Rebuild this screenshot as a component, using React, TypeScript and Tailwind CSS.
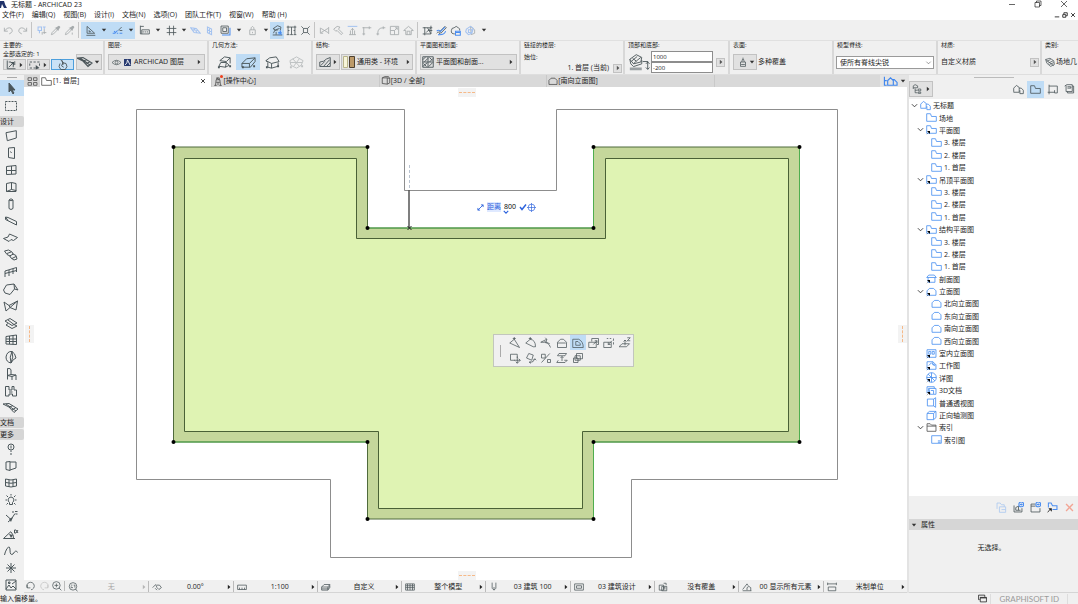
import React, { useState } from 'react';

type GlyphProps = {
  d: string;
  blue?: string; // parts drawn in the accent colour
  fill?: string; // solid parts
  className?: string;
};

// All glyphs are drawn on a 16 x 16 grid
function Glyph({ d, blue, fill, className = 'size-4 text-[#4b565a]' }: GlyphProps) {
  return (
    <svg viewBox="0 0 16 16" className={`shrink-0 ${className}`} fill="none" stroke="currentColor" strokeWidth="1.2" aria-hidden="true">
      <path d={d} />
      {blue ? <path d={blue} stroke="#4a8df0" strokeWidth="1.5" /> : null}
      {fill ? <path d={fill} fill="currentColor" stroke="none" /> : null}
    </svg>
  );
}

function Arrow({ down = false, className = 'text-[#333]' }: { down?: boolean; className?: string }) {
  return (
    <svg viewBox="0 0 6 6" className={`size-[6px] shrink-0 ${className}`} aria-hidden="true">
      <path d={down ? 'M0.8 1.8h4.4l-2.2 2.6z' : 'M1.8 0.8v4.4l2.6-2.2z'} fill="currentColor" />
    </svg>
  );
}

const menus = ['文件(F)', '编辑(Q)', '视图(B)', '设计(I)', '文档(N)', '选项(O)', '团队工作(T)', '视窗(W)', '帮助 (H)'];

type Tool = { name: string; d: string; blue?: string; fill?: string };

const arrowTool: Tool = { name: '箭头', d: 'M6 3v9l2-2 2 4 1-1-2-3h3z', fill: 'M6 3v9l2-2 2 4 1-1-2-3h3z' };

const designTools: Tool[] = [
  { name: '墙', d: 'M3 4.7L13.3 2.7V10L4.3 12.7z' },
  { name: '门', d: 'M5.5 3L11.5 2.5V13.5L5.5 12.5zM7.5 6.5L8.5 8' },
  { name: '窗', d: 'M3.5 4.5L13 3.5V12L3.5 12.5zM8.5 4V12M3.5 8.5H13' },
  { name: '转角窗', d: 'M3.5 4.5L8.5 3.5 13 4.5V11.5L8.5 10.5 3.5 12.5zM8.5 3.5V10.5M3.5 12.5H13V11' },
  { name: '柱', d: 'M6 4V12.5Q8 14.5 10 12.5V4Q8 1.5 6 4zM6 4Q8 5.5 10 4' },
  { name: '梁', d: 'M2.5 4L5 4.5 13.5 8.5V12L2.5 6.5zM2.5 4L5 7.5' },
  { name: '板', d: 'M.5 8.5L5 7 6.5 4 14.5 7.5 10.5 10.5 8 9.5 6 11.5z' },
  { name: '楼梯', d: 'M1.5 4L5.5 3 9 5 10 7 13 8.5 14 12 11 13 8 11 7 9 4 7.5zM4 6.5L8 5M6.5 9L10.5 7M9 11.5L13 9.5' },
  { name: '栏杆', d: 'M2 7L13.5 3.5M2 9.5L13.5 6.5M2 7V13M6 6V12M10 5V10M13.5 3.5V8' },
  { name: '屋顶', d: 'M.5 9L3.5 4 11 3 15 9 11.5 8 7 13.5 2 12z M11 3L11.5 8' },
  { name: '壳体', d: 'M1 4L6 7.5 14.5 3 13 12 7 9.5 3 13zM6 7.5L7 9.5 14.5 3' },
  { name: '天窗', d: 'M2 6L7 3.5 14 8 9 10.5zM5 8.5L3 10 9 13.5 14 11 11 9.5M5 5L11 9.5' },
  { name: '幕墙', d: 'M3 4.5L13.5 3V12.5L3 12zM6.5 4V12M10 3.5V12.5M3 7H13.5M3 9.5H13.5' },
  { name: '变形体', d: 'M3 8Q4 2 9 2.5Q12 4 13 9Q10 10 8 14Q3 13 3 8zM9 2.5Q6 8 8 14M9 2.5Q11 8 8 14' },
  { name: '对象', d: 'M4.5 2.5Q8 2 8 4V8.5L13 9V14M4.5 2.5V13.5M4.5 9.5L9 10.5V14M9 10.5L13 9M8 8.5L4.5 9.5' },
  { name: '区域', d: 'M2.5 3.5H6V7H9V3.5H11V7H13.5V13H9.5V11H6V13H2.5zM6 9H9.5' },
  { name: '网面', d: 'M0 4L6 3.5 15 9 11 12.5 6 7zM3 4L13 11M6.5 7L10 5.5M9 10L13 7.5' },
];

const moreTools: Tool[] = [
  { name: '轴网', d: 'M8 3A3 3 0 1 1 8 9A3 3 0 1 1 8 3M8 4.5V7.5M8 9.5V11M8 12V14' },
  { name: '墙端', d: 'M3 4L7 3.5V12.5L3 11.5zM7 4H13V10L7 12' },
  { name: '角窗', d: 'M2.5 4Q8 6 13.5 4V11Q8 13 2.5 11zM2.5 7.5Q8 9 13.5 7.5M6 5V12M10 5V12' },
  { name: '灯', d: 'M8 5A3 3 0 0 1 9.5 10.5V12.5H6.5V10.5A3 3 0 0 1 8 5M8 2V3.5M2.5 8H4M12 8H13.5M3.5 3.5L5 5M12.5 3.5L11 5M3.5 12.5L5 11M12.5 12.5L11 11' },
  { name: '径向标注', d: 'M3 6L8 10.5 12 4.5M5 13L8 10.5M10 4V2M12 2.5H14.5M12.5 5H14.5', fill: 'M6 10L10 8 8 13z' },
  { name: '角度标注', d: 'M.5 12.5H12M.5 12.5L8 5.5M8 6Q11 9 10.5 12.5M15 4L13 7H11.5V4H13L15 7', fill: 'M6 8L10 9 8 12z' },
  { name: '样条曲线', d: 'M1.5 12Q2 9 4 5.5Q7 2 7 7Q7 13 10 11Q13 6 14.5 9.5' },
  { name: '热点', d: 'M8 3V13M3 8H13M4.5 4.5L11.5 11.5M11.5 4.5L4.5 11.5' },
  { name: '图片', d: 'M3 3H13V13H3zM3 12L6 8 8 11 10 9 13 12M5.5 5H7V6.5H5.5zM9 7L13 4' },
];

function ToolButton({ tool, className }: { tool: Tool; className: string }) {
  return (
    <button aria-label={tool.name} className={`flex items-center justify-center pr-0.5 ${className}`}>
      <Glyph d={tool.d} fill={tool.fill} className="size-4 stroke-1 text-[#4b565a]" />
    </button>
  );
}

function ToolHeader({ children }: { children: React.ReactNode }) {
  return <div className="h-[11px] shrink-0 rounded-r-xs bg-[#d6d6d6] leading-[11px]">{children}</div>;
}

function Toolbox() {
  return (
    <aside className="flex w-6 shrink-0 flex-col overflow-hidden">
      <div className="mx-auto mt-0.5 mb-[2px] h-px w-2.5 shrink-0 bg-[#aaa]" />
      <ToolButton tool={arrowTool} className="h-4 shrink-0 bg-[#bfdcf5]" />
      <button aria-label="选取框" className="flex h-5 shrink-0 items-center justify-center pr-0.5">
        <svg viewBox="0 0 12 10" className="h-2.5 w-3" fill="none" stroke="#4b565a" strokeDasharray="2 1" aria-hidden="true">
          <path d="M.5 .5H11.5V9.5H.5z" />
        </svg>
      </button>
      <ToolHeader>设计</ToolHeader>
      <div className="flex flex-col pb-px">
        {designTools.map((t) => <ToolButton key={t.name} tool={t} className="h-[17px]" />)}
      </div>
      <ToolHeader>文档</ToolHeader>
      <div className="h-px shrink-0" />
      <ToolHeader>更多</ToolHeader>
      <div className="flex min-h-0 flex-1 flex-col">
        {moreTools.map((t) => <ToolButton key={t.name} tool={t} className="min-h-0 flex-1" />)}
      </div>
    </aside>
  );
}

type BarItem = Tool & { width: string; dim?: boolean; on?: boolean; arrow?: boolean; sep?: boolean };

const sep = (name: string): BarItem => ({ name, d: '', width: 'w-[5px]', sep: true });
const drop = (name: string, width: string): BarItem => ({ name, d: '', width, arrow: true });

const barItems: BarItem[] = [
  { name: '撤销', d: 'M2 4V9H7M2 9Q7 2 12 5Q16 10 9 13', width: 'w-[14px]', dim: true },
  { name: '重做', d: 'M14 4V9H9M14 9Q9 2 4 5Q0 10 7 13', width: 'w-[14px]', dim: true },
  sep('s1'),
  { name: '查找', d: 'M9 10V14M12 6V13M10.5 11H15', blue: 'M3 3H8V8H3zM5 8V12M10 3H14M12 3V6', width: 'w-[14px]', dim: true },
  { name: '吸取参数', d: 'M2 14L3 11 9 5 11 7 5 13zM8 4L12 8M10 5L13 2 14 3 11 6', fill: 'M8 4L13 1 15 3 12 8z', width: 'w-[14px]', dim: true },
  { name: '注入参数', d: 'M2 14L3 11 9 5 11 7 5 13zM8 4L12 8M10 5L13 2 14 3 11 6M12 11V14', fill: 'M8 4L13 1 15 3 12 8z', width: 'w-[14px]', dim: true },
  sep('s2'),
  { name: '测量', d: 'M3 2V12H14zM6 8V10H8zM2 15H15', width: 'w-[18px]', on: true },
  { ...drop('测量选项', 'w-[9px]'), on: true },
  { name: '辅助线', d: 'M9 8L14 3M11 8H15', blue: 'M1 12H5M7 12H9M11 12H15M3 9L5 11 8 8', width: 'w-[18px]', on: true },
  { ...drop('辅助线选项', 'w-[9px]'), on: true },
  { name: '坐标', d: 'M2 1V13M2 2H7M4 7H15V13H4zM6 9V11M9 9V11M12 9V11M2 13H4', width: 'w-[18px]' },
  drop('坐标选项', 'w-[9px]'),
  { name: '网格', d: 'M5 1V15M11 1V15M1 5H15M1 11H15', width: 'w-[18px]' },
  drop('网格选项', 'w-[8px]'),
  { name: '工作平面', d: '', blue: 'M1 4L9 5 15 12 6 11zM4 7L12 8M5 4L11 12', width: 'w-[14px]', dim: true },
  { name: '垂直平面', d: '', blue: 'M5 3L11 6V14L5 11zM5 7L11 10M8 4V12', width: 'w-[14px]', dim: true },
  { name: '边框', d: 'M1.5 1.5H12V12H1.5zM4 4H9.5V9.5H4z', blue: 'M3 14.5H14.5V4', width: 'w-[18px]' },
  drop('边框选项', 'w-[9px]'),
  { name: '锁定', d: 'M4 7H12V14H4zM6 7V4Q8 0 10 4V7M8 10V12', width: 'w-[18px]', dim: true },
  drop('锁定选项', 'w-[9px]'),
  { name: '追踪', d: 'M1 14.5H15M2 12L4 8 9 7M2 5L8 1 13 3 12 8M2 5L5 7 11 5M4 8L2 5M6 10V14', blue: 'M9 11H14M9 13H14M10 10L14 14M12 8L13 13', width: 'w-[14px]', on: true },
  { name: '标注', d: 'M1 3H15M3 1V14M8 3V14M13 1V14M1 14H5M6 14H10M11 14H15M3 8H5M11 8H13', width: 'w-[14px]' },
  { name: '吸附', d: 'M5 5H11V11H5zM2 2L5 5M14 2L11 5M2 14L5 11M14 14L11 11', width: 'w-[14px]' },
  sep('s3'),
  { name: '修剪', d: 'M2 4V12M3 5L13 11M3 11L13 5M14 3V13M2 12H6', width: 'w-[14px]', dim: true },
  { name: '拆分', d: 'M1 6L6 2 10 3 8 6 14 12 12 14 6 8 4 9z', width: 'w-[14px]', dim: true },
  { name: '调整', d: 'M5 8V14M8 5V14M11 8V14M3 14H13M6 7L8 5 10 7', blue: 'M1 2H15', width: 'w-[14px]', dim: true },
  { name: '相交', d: 'M4 15V3M2 4H15M12 2V6M2 13H6', width: 'w-[14px]', dim: true },
  { name: '倒角', d: 'M4 15V12Q4 4 12 4H15M2 13H6M12 2V6', width: 'w-[14px]', dim: true },
  { name: '缩放', d: 'M2 2H14V14H2zM2 8H8V14M8 8L12 4M9 4H12V7', width: 'w-[14px]', dim: true },
  { name: '房屋', d: 'M1 8L8 2 15 8H12V14H4V8zM6 14V9H10V14', width: 'w-[14px]', dim: true },
  sep('s4'),
  { name: '组合', d: 'M4 3V15M1 4H15M4 13H13V1M1 13H4M8 4L13 13M13 4L6 11M9 8H15', width: 'w-[14px]' },
  { name: '编辑', d: 'M5 10L13 2 15 4 7 12zM1 12Q4 8 6 14', blue: 'M1 9Q4 6 6 9M3 14Q12 15 14 9M6 10L13 3', width: 'w-[14px]' },
  { name: '云线', d: 'M7 13Q1 13 2 8Q2 4 6 4Q9 0 12 4Q15 5 14 8', blue: 'M8 9H15V15H8zM8 11H15', width: 'w-[14px]' },
  { name: '模型', d: 'M8 2L14 7V12L9 14z', blue: 'M2 6L8 2 12 5 10 12 5 14 1 10zM5 7H10V11H5z', width: 'w-[16px]', dim: true },
  drop('更多', 'w-[12px]'),
];

function MainBar() {
  return (
    <div className="flex h-[21px] items-center border-b border-[#e0e0e0] pl-px">
      {barItems.map((item) => {
        if (item.sep) return <div key={item.name} className={`flex h-4 shrink-0 justify-center ${item.width}`}><span className="w-px bg-[#c4c4c4]" /></div>;
        return (
          <button
            key={item.name}
            aria-label={item.name}
            className={`flex h-[17px] shrink-0 items-center justify-center ${item.width} ${item.on ? 'bg-[#bfdcf5]' : ''}`}
          >
            {item.arrow ? (
              <Arrow down />
            ) : (
              <Glyph d={item.d} blue={item.blue} fill={item.fill} className={`size-[11px] text-[#4b565a] ${item.dim ? 'opacity-45' : ''}`} />
            )}
          </button>
        );
      })}
    </div>
  );
}

function Section({ title, className = 'w-[104px] border-r-2', children }: { title: string; className?: string; children: React.ReactNode }) {
  return (
    <section className={`flex shrink-0 flex-col overflow-hidden border-[#d8d8d8] pl-[3px] ${className}`}>
      <h2 className="h-[9px] shrink-0 text-[6px] leading-[9px]">{title}</h2>
      {children}
    </section>
  );
}

const box = 'flex items-center border border-[#c2c2c2] bg-[#e1e1e1]';
const infoIcon = 'size-3 text-[#4b565a]';

function SmallArrow({ label }: { label: string }) {
  return (
    <button aria-label={label} className={`${box} size-[9px] shrink-0 justify-center`}>
      <Arrow className="text-[#555]" />
    </button>
  );
}

const geometry = [
  { name: '直边', d: 'M3 6L8 2 14 3V9M3 6L10 7 14 3M2 12L4 8H10L9 13zM10 8L13 11 9 13' },
  { name: '斜坡', d: 'M1 9L6 4 15 3V7L10 13H1zM1 9H9L15 3M9 9V13' },
  { name: '矩形', d: 'M1 6L5 3 12 2 15 7 7 9zM3 8V13L7 14 14 12V8M1 6L3 8M7 9V14' },
  { name: '旋转', d: 'M1 6L8 2 15 6 13 11 8 14 2 11zM4 4L11 12M1 8L14 8M11 4L5 12' },
];

function InfoBox() {
  const [top, setTop] = useState('1000');
  const [bottom, setBottom] = useState('-200');
  return (
    <div className="flex h-[34px] overflow-hidden border-b border-[#dedede]">
      <Section title="主要的:" className="w-[105px] border-r-2">
        <div className="flex items-end gap-0.5">
          <div className="w-[71px]">
            <p className="h-[9px] text-[6px] leading-[9px]">全部选定的: 1</p>
            <div className="flex gap-px">
              <button aria-label="全选" className={`${box} h-[11px] flex-1 justify-around`}>
                <Glyph className={infoIcon} d="M3 2V13H14M5 11L11 5M5 4H8M11 8V11M13 3V8" fill="M7 4H12V9z" /><Arrow />
              </button>
              <button aria-label="选取框" className={`${box} h-[11px] flex-1 justify-around`}>
                <Glyph className={infoIcon} d="M1 4H4M6 4H9M11 4H14M1 6V9M1 12H4M6 12H9M14 6V9" fill="M9 8L14 12 9 14z" /><Arrow />
              </button>
              <button aria-label="磁铁" className="flex h-[11px] flex-1 items-center justify-center border border-[#4d9fdc] bg-[#c9e2f6]">
                <Glyph className={infoIcon} d="M5 1L9 6M7 2L8 8M4 6Q1 10 5 14H11Q15 10 12 6L8 5 6 9 9 11" />
              </button>
            </div>
          </div>
          <button aria-label="网面设置" className={`${box} h-4 w-[26px] justify-between pr-px`}>
            <Glyph d={designTools[16].d} /><Arrow down />
          </button>
        </div>
      </Section>
      <Section title="图层:">
        <button className={`${box} mt-1 mr-0.5 h-4 gap-0.5 pr-0.5 pl-[3px]`}>
          <Glyph className="size-[9px] text-[#4b565a]" d="M0 8Q8 0 16 8Q8 16 0 8M8 5.5A2.5 2.5 0 1 1 8 10.5A2.5 2.5 0 1 1 8 5.5" />
          <svg viewBox="0 0 8 8" className="mx-px size-[7px]" aria-hidden="true">
            <path d="M0 0H8V8H0z" fill="#273a70" /><path d="M1 7Q4 5 4 1L7 7" fill="none" stroke="#fff" />
          </svg>
          <span className="flex-1 text-left whitespace-nowrap">ARCHICAD 图层</span>
          <Arrow />
        </button>
      </Section>
      <Section title="几何方法:">
        <div className="mt-1 mr-[3px] flex">
          {geometry.map((g, i) => (
            <button key={g.name} aria-label={g.name} className={`flex h-4 flex-1 items-center justify-center ${i === 1 ? 'bg-[#bfdcf5]' : ''}`}>
              <Glyph d={g.d} fill="M1 12h2v2H1zM13 11h2v2h-2z" className={`size-[15px] stroke-1 text-[#4b565a] ${i === 3 ? 'opacity-30' : ''}`} />
            </button>
          ))}
        </div>
      </Section>
      <Section title="结构:">
        <div className="mt-1 mr-0.5 flex gap-px">
          <button aria-label="结构类型" className={`${box} h-4 w-6 justify-between pr-px pl-0.5`}>
            <Glyph className={infoIcon} d="M1 8L6 7 10 4 15 2V14H1zM2 13L8 7M6 14L14 5M10 14L15 9" /><Arrow />
          </button>
          <button className={`${box} h-4 flex-1 gap-px pr-px`}>
            <svg viewBox="0 0 14 12" className="h-3 w-3.5 shrink-0" aria-hidden="true">
              <path d="M1.5 .5H5.5V11.5H1.5z" fill="#f7f5d9" stroke="#b9b58a" /><path d="M7.5 .5H12.5V11.5H7.5z" fill="#bd9a68" stroke="#4d4030" />
            </svg>
            <span className="flex-1 text-left whitespace-nowrap">通用类 - 环境</span>
            <Arrow />
          </button>
        </div>
      </Section>
      <Section title="平面图和剖面:">
        <button className={`${box} mt-1 mr-0.5 h-4 gap-0.5 pr-0.5 pl-px`}>
          <Glyph className={infoIcon} d="M1 1H15V15H1zM1 8H15M8 1V15M1 5L5 1M3 8L8 3M10 8L15 3M1 14L7 9M9 14L14 9M10 2L14 6M2 10L6 14" />
          <span className="flex-1 text-left whitespace-nowrap">平面图和剖面...</span>
          <Arrow />
        </button>
      </Section>
      <Section title="链接的楼层:">
        <p className="mt-0.5 h-2.5 text-[6px] leading-[10px]">始位:</p>
        <div className="mr-px flex h-3 items-center justify-end gap-1">
          <span className="leading-3">1. 首层 (当前)</span>
          <SmallArrow label="选择楼层" />
        </div>
      </Section>
      <Section title="顶部和底部:" className="w-[105px] border-r-2">
        <div className="mt-px mr-[3px] flex items-center">
          <svg viewBox="0 0 24 20" className="mr-px h-5 w-[22px] shrink-0" fill="none" stroke="#4b565a" aria-hidden="true">
            <path d="M2 7L9 2 15 5 14 10 6 12zM2 7L3 12 6 15 15 12V8M5 6L9 9 14 5M6 12L9 9M4 9L10 4M21.5 10V18M19.5 12L21.5 10 23.5 12M19.5 16L21.5 18 23.5 16M16 9.5H22" />
            <path d="M2 17.5H15" stroke="#9aa0a3" strokeWidth="3" />
          </svg>
          <div className="mr-[3px] flex min-w-0 flex-1 flex-col">
            <input aria-label="顶部" value={top} onChange={(e) => setTop(e.target.value)} className="h-[11px] w-full border border-[#8d8d8d] bg-white pl-px text-[6px]" />
            <input aria-label="底部" value={bottom} onChange={(e) => setBottom(e.target.value)} className="h-[11px] w-full border border-[#8d8d8d] bg-white pl-px text-[6px]" />
          </div>
          <SmallArrow label="高度选项" />
        </div>
      </Section>
      <Section title="表面:">
        <div className="mt-1 flex items-center gap-px">
          <button aria-label="表面" className={`${box} h-4 w-6 justify-between pr-px pl-1`}>
            <Glyph className="size-2.5 text-[#4b565a]" d="M4 8H12V15H4zM6 8L7 4H9L10 8M8 4V1M5 12H11" /><Arrow down />
          </button>
          <span>多种覆盖</span>
        </div>
      </Section>
      <Section title="模型脊线:">
        <div className="relative mt-[6px] mr-0.5 -ml-px">
          <select aria-label="模型脊线" className="h-[13px] w-full appearance-none border border-[#9a9a9a] bg-white pl-[3px] text-[7px] leading-[11px]">
            <option>使所有脊线尖锐</option>
          </select>
          <Glyph d="M3 6L8 11 13 6" className="pointer-events-none absolute top-[3px] right-0.5 size-[7px] text-[#444]" />
        </div>
      </Section>
      <Section title="材质:">
        <div className="mt-1 mr-px flex h-4 items-center justify-between">
          <span>自定义材质</span>
          <SmallArrow label="选择材质" />
        </div>
      </Section>
      <Section title="类别:" className="flex-1">
        <div className="mt-1 flex h-4 items-center gap-px whitespace-nowrap">
          <Glyph className="size-2.5 text-[#4b565a]" d="M1 4L8 2 14 6 15 12 9 15 3 10zM3 7L9 4M5 10L13 6M7 12L14 9M1 4L14 14" />
          <span>场地几</span>
        </div>
      </Section>
    </div>
  );
}

const folder = 'M1 13.5V2.5H6.5L8 6.5H15V13.5z';
const house = 'M1.5 13.5V7L5 3.5H11L14.5 7V13.5z';
const homes = 'M1 11V6L5 2 9 5V12H1zM9 6H12L15 9V14H10V9';

const tabs = [
  { label: '[操作中心]', d: 'M4 15L5 6H11L12 15M6 6V3H10V6M5 10H11M2 15H6M10 15H14M8 10V15M6 3L10 6', dot: true },
  { label: '[3D / 全部]', d: 'M2 3H10V13L2 12zM10 3L14 4V11L10 13M2 3L6 1H12L14 4' },
  { label: '[南向立面图]', d: house },
];

function TabBar() {
  return (
    <div className="flex h-3 shrink-0 bg-[#d9d9d9]">
      <button aria-label="选项卡概览" className="flex w-4 items-center justify-center bg-[#d9d9d9]">
        <Glyph className="size-[11px] text-[#555]" d="M1.5 2.5H6.5V6.5H1.5zM9.5 2.5H14.5V6.5H9.5zM1.5 9.5H6.5V13.5H1.5zM9.5 9.5H14.5V13.5H9.5z" />
      </button>
      <div className="flex flex-1 items-center bg-white pr-[5px] pl-px">
        <Glyph className="size-[11px] text-[#555]" d={folder} />
        <span className="flex-1 pl-px">[1. 首层]</span>
        <button aria-label="关闭"><Glyph className="size-[6px] stroke-2 text-black" d="M3 3L13 13M13 3L3 13" /></button>
      </div>
      {tabs.map((t) => (
        <button key={t.label} className="flex flex-1 items-center border-l border-[#c9c9c9] pl-px text-left">
          <span className="relative">
            <Glyph className="size-2.5 text-[#444]" d={t.d} />
            {t.dot ? <span className="absolute -top-px right-0 size-[3px] rounded-full bg-[#f0401c]" /> : null}
          </span>
          {t.label}
        </button>
      ))}
      <div className="flex-1 border-l border-[#c9c9c9]" />
      <button aria-label="弹出导航" className="flex w-[27px] items-center justify-between bg-[#e4e4e4] pr-px pl-[3px]">
        <Glyph className="size-[15px] text-[#3f86ee]" d="M1.5 3V12H4M1.5 7H4M5 12V7L8 4 11 7V12zM10 6H12L15 9V12H11" />
        <Arrow down />
      </button>
    </div>
  );
}

const corners = [
  [173, 147], [367, 147], [367, 228], [593, 228], [593, 147], [799, 147],
  [799, 442], [593, 442], [593, 519], [367, 519], [367, 442], [173, 442],
];

const petPalette: Tool[] = [
  { name: '移动节点', d: 'M1 8L7 3 14 14zM5 2H9M7 0V4' },
  { name: '曲线边', d: 'M1 8L7 3Q14 4 14 13H11zM5 2H9M7 0V4' },
  { name: '切线', d: 'M1 7Q12 6 14 14M1 7L9 3M7 1L9 3 8 7M6 6L13 9' },
  { name: '插入节点', d: 'M2 14V7L6 3H10L14 7V14zM2 8H13' },
  { name: '偏移边', d: 'M1 14V3H9Q15 6 15 14zM5 11V6H8L11 9V11z' },
  { name: '增加', d: 'M1 7H11V14H1zM5 6V2H14V10H12M7 10L12 5M9 5H12V8' },
  { name: '减少', d: 'M1 7H11V14H1zM5 2H7M9 2H11M14 2V5M14 7V10M12 5L7 10M7 7V10H10' },
  { name: '高度', d: 'M0 13L4 9H14L10 13zM8 11V4M6 6L8 4 10 6M11 1H15L11 5H15' },
  { name: '拖移', d: 'M2 3H11V8M8 11H2V3M11 6V15M7 11H15M9 13L11 15 13 13M13 9L15 11 13 13' },
  { name: '旋转', d: 'M5 2L11 4 9 11 2 8zM6 14Q12 14 13 9M11 11L13 9 15 11M7 12L6 14 8 15' },
  { name: '镜像', d: 'M2 14L13 2M2 3H7V8H2zM10 10H14V14H10z' },
  { name: '提升', d: 'M3 11L1 14H12L15 11H11M4 2H14L12 5H2zM8 12V6M6 8L8 6 10 8' },
  { name: '多重复制', d: 'M6 2H14V9H6zM4 5H11V11H4zM2 8H8V14H2z' },
];

function Handle({ vertical = false, className }: { vertical?: boolean; className: string }) {
  return (
    <div className={`absolute flex items-center justify-center bg-[#f3f3f3] ${vertical ? 'h-[18px] w-[9px]' : 'h-[9px] w-[18px]'} ${className}`}>
      <div className={`border-dashed border-[#f6b988] ${vertical ? 'h-4 border-l' : 'w-4 border-t'}`} />
    </div>
  );
}

function Canvas() {
  return (
    <div className="relative min-h-0 flex-1 overflow-hidden bg-white">
      <svg viewBox="24 87 883 493" preserveAspectRatio="xMinYMin meet" className="block h-full w-full" aria-hidden="true">
        <path d="M136.5 109.5H404.5V190.5H556.5V109.5H837.5V479.5H631.5V557.5H330.5V479.5H136.5z" fill="none" stroke="#8d8d8d" />
        <path d="M173.5 147H367.5V228H593.5V147H799.5V442H593.5V519H367.5V442H173.5z" fill="#c5d79b" stroke="#4f6b3c" />
        <path d="M367.5 228H593.5V147M799.5 147V442H593.5V519M173.5 442H367.5" fill="none" stroke="#4fae4f" />
        <path d="M184.5 158.5H356.5V238.5H605.5V158.5H788.5V431.5H582.5V508.5H378.5V431.5H184.5z" fill="#dff3b3" stroke="#4a6136" />
        {corners.map(([x, y]) => <circle key={`${x}-${y}`} cx={x + 0.5} cy={y} r="2" fill="#000" />)}
        <path d="M409.5 165V190" stroke="#b9c3d0" strokeDasharray="3 2" />
        <path d="M409 190V228" stroke="#555" strokeWidth="1.5" />
        <path d="M407.5 226l4 4m0-4l-4 4" stroke="#222" />
      </svg>
      <Handle className="top-px left-1/2 -ml-2" />
      <Handle className="bottom-0 left-1/2 -ml-2" />
      <Handle vertical className="top-[238px] left-px" />
      <Handle vertical className="top-[238px] right-0" />
      <div className="absolute top-[115px] left-[453px] flex items-center text-[#2d63dd]">
        <Glyph className="mr-[3px] size-[7px] stroke-2" d="M2 14L14 2M9 2H14V7M2 9V14H7" />
        <label htmlFor="distance" className="mr-[3px] bg-[#dfe9ff]">距离</label>
        <input id="distance" defaultValue="800" className="w-3.5 text-[7px] text-black" />
        <Glyph className="ml-px size-2 stroke-3" d="M2 8L6 13 14 3" />
        <Glyph className="size-[9px]" d="M8 2A6 6 0 1 1 8 14A6 6 0 1 1 8 2M8 0V16M0 8H16" />
      </div>
      <Glyph className="absolute top-[122px] left-[479px] size-[6px] stroke-3 text-[#2d63dd]" d="M2 5L8 11 14 5" />
      <div className="absolute top-[247px] left-[469px] flex w-[141px] items-center border border-[#c2c6bd] bg-[#f0f0f0] pl-[6px]">
        <div className="mr-[6px] h-3 w-px shrink-0 bg-[#aaa]" />
        <div className="grid flex-1 grid-cols-8 pb-px">
          {petPalette.map((t, i) => (
            <button key={t.name} aria-label={t.name} className={`flex h-[15px] items-center justify-center ${i === 4 ? 'bg-[#bfdcf5]' : ''}`}>
              <Glyph className="size-3 stroke-1 text-[#4b565a]" d={t.d} />
            </button>
          ))}
        </div>
      </div>
    </div>
  );
}

const quickOptions = [
  { label: '无', d: '', dim: true },
  { label: '0.00°', d: 'M1 9L6 4 8 9M8 5L12 5 15 9 11 12 8 9M5 10L8 13' },
  { label: '1:100', d: 'M1 5H15V12H1zM4 9V12M8 9V12M12 9V12' },
  { label: '自定义', d: 'M1 8L5 4H14L11 8zM1 8V13H11L14 9V4M1 11H11L14 7M11 8V13' },
  { label: '整个模型', d: 'M1 3H15V13H1zM1 6H15M1 9H15M4 3V13M8 3V13M12 3V13' },
  { label: '03 建筑 100', d: 'M5 1V10L8 13 11 10V1M8 8V13' },
  { label: '03 建筑设计', d: 'M1 3H15V13H1zM4 6H12V10H4z' },
  { label: '没有覆盖', d: 'M2 5H9V13H2zM6 7H14V14H6zM8 9H12M8 11H12M9 2H13V5' },
  { label: '00 显示所有元素', d: 'M1 12L8 3 10 6M1 14H15M8 13V9L11 7 14 9V14' },
  { label: '米制单位', d: 'M1 3H15M1 1V5M15 1V5M2 8H14V14H2z' },
];

function QuickOptions() {
  return (
    <div className="flex h-[13px] shrink-0 items-center border-b border-[#d5d5d5] bg-[#f0f0f0]">
      <div className="flex w-[41px] items-center justify-around border-r border-[#bbb]">
        <button aria-label="上一视图"><Glyph className="size-2.5 text-[#4b565a]" d="M2 6V11H7M2 11A6 6 0 1 1 8 14" /></button>
        <button aria-label="下一视图"><Glyph className="size-2.5 text-[#c3c3c3]" d="M14 6V11H9M14 11A6 6 0 1 0 8 14" /></button>
        <button aria-label="放大"><Glyph className="size-2.5 text-[#4b565a]" d="M7 1A6 6 0 1 1 7 13A6 6 0 1 1 7 1M11 11L15 15M7 4V10M4 7H10" /></button>
      </div>
      {quickOptions.map((q, i) => (
        <div key={q.label} className={`flex h-[11px] flex-1 items-center pt-px pl-[3px] ${i < 9 ? 'border-r border-[#bbb]' : ''}`}>
          {q.dim ? (
            <button aria-label="适合窗口"><Glyph className="size-2.5 text-[#4b565a]" d="M8 1A6 6 0 1 1 8 13A6 6 0 1 1 8 1M12 11L15 15M5 5H7M9 5H11V9M5 7V9H8" /></button>
          ) : (
            <Glyph className="size-2.5 text-[#4b565a]" d={q.d} />
          )}
          <button className={`flex flex-1 items-center pr-px whitespace-nowrap ${q.dim ? 'text-[#a5a5a5]' : ''}`}>
            <span className="flex-1 pl-[3px] text-center">{q.label}</span>
            <Arrow className={q.dim ? 'text-[#b5b5b5]' : 'text-[#222]'} />
          </button>
        </div>
      ))}
    </div>
  );
}

type TreeRow = { label: string; level: 0 | 1 | 2; d: string; open?: boolean; link?: boolean; gray?: boolean };

const storeys: TreeRow[] = ['3. 楼层', '2. 楼层', '1. 首层'].map((label) => ({ label, level: 2, d: folder }));
const elevations: TreeRow[] = ['北向立面图', '东向立面图', '南向立面图', '西向立面图'].map((label) => ({ label, level: 2, d: house }));

const tree: TreeRow[] = [
  { label: '无标题', level: 0, d: homes, open: true },
  { label: '场地', level: 1, d: folder },
  { label: '平面图', level: 1, d: folder, open: true, link: true },
  ...storeys,
  { label: '吊顶平面图', level: 1, d: folder, open: true, link: true },
  ...storeys,
  { label: '结构平面图', level: 1, d: folder, open: true, link: true },
  ...storeys,
  { label: '剖面图', level: 1, d: 'M1 6.5L4 3H12L15 6.5zM3 6.5V13.5H13V6.5', link: true },
  { label: '立面图', level: 1, d: house, open: true, link: true },
  ...elevations,
  { label: '室内立面图', level: 1, d: 'M1.5 2.5H14.5V13.5H1.5zM4 5H7V9H4zM9 5H12V9H9z', link: true },
  { label: '工作图', level: 1, d: 'M1.5 13.5V2.5H10L14.5 7V13.5zM4 8L8 4 13 9M10 2.5V7H14', link: true },
  { label: '详图', level: 1, d: 'M8 1A7 7 0 1 1 8 15A7 7 0 1 1 8 1M1 8H15M8 1V15M3 3L13 13', link: true },
  { label: '3D文档', level: 1, d: 'M1.5 12V2.5H12V5M4 5H14.5V13.5H6zM7 8H11V13M4 5V12', link: true },
  { label: '普通透视图', level: 1, d: 'M2 3H11V13H2zM11 3L14 1V15L11 13' },
  { label: '正向轴测图', level: 1, d: 'M1.5 5L5 2H14.5V11L11 14H1.5zM1.5 5H11V14M11 5L14.5 2' },
  { label: '索引', level: 1, d: 'M1.5 13.5V2.5H6L8 4.5H14.5V13.5zM1.5 6H14.5', open: true, gray: true },
  { label: '索引图', level: 2, d: 'M1 2.5H15V13.5H1zM10 10H14M10 12H14' },
];

const indent = ['pl-0.5', 'pl-2', 'pl-[13px]'];

function Navigator() {
  return (
    <aside className="flex w-[171px] shrink-0 flex-col border-l-2 border-[#e3e3e3]">
      <div className="mx-auto mt-0.5 h-px w-10 shrink-0 bg-[#bbb]" />
      <div className="flex h-[21px] shrink-0 items-center justify-between pt-px">
        <button aria-label="项目选择" className={`${box} h-4 w-6 justify-around`}>
          <Glyph className="size-2.5 text-[#4b565a]" d="M2 8V3L5 1 9 3V6H2M5 7V14H9M5 10H9M10 8H14V11H10zM10 13H14V15H10z" /><Arrow />
        </button>
        <div className="flex">
          {[homes, folder, 'M3 1V15M1 12H11M3 3H15V13H11V9', 'M1 3L4 1H12V11H3V2M12 3H14V13H5V11M5 4H10V6H5'].map((d, i) => (
            <button key={d} aria-label={['项目图', '视图映射', '图册', '发布器'][i]} className={`flex size-[17px] items-center justify-center ${i === 1 ? 'bg-[#bfdcf5]' : ''}`}>
              <Glyph className="size-[11px] text-[#4b565a]" d={d} />
            </button>
          ))}
        </div>
      </div>
      <div className="flex-1 bg-white">
        <ul className="grid h-[347px] auto-rows-fr">
          {tree.map((row, i) => (
            <li key={i} className={`flex items-center ${indent[row.level]}`}>
              <span className="flex w-[9px]">
                {row.open ? <Glyph className="size-[7px] stroke-2 text-[#333]" d="M2 5L8 11 14 5" /> : null}
              </span>
              <span className="relative mr-0.5">
                <Glyph className={`size-[11px] ${row.gray ? 'text-[#555]' : 'text-[#4a90f0]'}`} d={row.d} />
                {row.link ? <Glyph className="absolute bottom-0 left-0 size-1 text-black" d="M3 13L13 3" fill="M4 0H16V12z" /> : null}
              </span>
              <span className="pt-px leading-[11px]">{row.label}</span>
            </li>
          ))}
        </ul>
      </div>
      <div className="flex h-[23px] shrink-0 items-center justify-end gap-[6px] pr-[3px]">
        <button aria-label="克隆文件夹" className="opacity-40"><Glyph className="size-[11px] text-[#4a90f0]" d="M1.5 10V1.5H6L8 4H12V7M5 7H14V15H5zM8 11H14" /></button>
        <button aria-label="保存视图"><Glyph className="size-[11px] text-[#4b565a]" d="M1.5 5V14.5H13V9M4 12V8L8 6V12M4 12H11" blue="M12 0A3.5 3.5 0 1 1 12 7A3.5 3.5 0 1 1 12 0M12 2V5M10 3.5H14" /></button>
        <button aria-label="新建文件夹"><Glyph className="size-[11px] text-[#4b565a]" d="M8 3H1.5V14.5H14.5V9M1.5 6H8" blue="M12 0A3.5 3.5 0 1 1 12 7A3.5 3.5 0 1 1 12 0M12 2V5M10 3.5H14" /></button>
        <button aria-label="视图设置"><Glyph className="size-[11px] text-[#222]" d="M1 15L5 10" fill="M2 9H7V14z" blue="M2 8V1.5H6L8 5.5H14.5V11H8" /></button>
        <button aria-label="删除"><Glyph className="size-[11px] stroke-2 text-[#f2a595]" d="M3 3L13 13M13 3L3 13" /></button>
      </div>
      <h2 className="flex h-[11px] shrink-0 items-center gap-1 bg-[#d6d6d6] pl-0.5"><Arrow down />属性</h2>
      <p className="h-[63px] shrink-0 border-b border-[#d5d5d5] pt-[13px] pr-1 text-center">无选择。</p>
    </aside>
  );
}

function App() {
  return (
    <div className="flex h-screen flex-col overflow-hidden bg-[#f0f0f0] font-['Open_Sans','Noto_Sans_CJK_SC',sans-serif] text-[7px] leading-[10px] text-[#1c1c1c]">
      <header className="bg-white">
        <div className="flex h-[9px] items-center justify-between overflow-hidden">
          <h1 className="flex items-center gap-1 leading-[8px]">
            <svg viewBox="0 0 7 8" className="h-2 w-[7px]" aria-hidden="true">
              <path d="M0 0H4Q5 4 7 7H4L2 3 1 7H0z" fill="#22346b" />
            </svg>
            无标题 - ARCHICAD 23
          </h1>
          <div className="flex gap-[18px] pr-2.5 pb-0.5">
            <button aria-label="最小化"><Glyph className="size-2 text-black" d="M2 9H14" /></button>
            <button aria-label="还原"><Glyph className="size-2 text-black" d="M2 5H11V14H2zM5 5V2H14V11H11" /></button>
            <button aria-label="关闭"><Glyph className="size-2 text-black" d="M2 2L14 14M14 2L2 14" /></button>
          </div>
        </div>
        <div className="flex h-[11px] items-center justify-between pt-px pr-0.5 pl-0.5">
          <nav className="flex gap-2">
            {menus.map((m) => <button key={m} className="whitespace-nowrap">{m}</button>)}
          </nav>
          <div className="flex gap-0.5">
            <button aria-label="最小化文档"><Glyph className="size-[6px] stroke-2 text-black" d="M2 13H14" /></button>
            <button aria-label="还原文档"><Glyph className="size-[6px] stroke-2 text-black" d="M2 7H10V14H2zM5 6V2H14V10H11" /></button>
            <button aria-label="关闭文档"><Glyph className="size-[6px] stroke-2 text-black" d="M3 3L13 13M13 3L3 13" /></button>
          </div>
        </div>
      </header>
      <MainBar />
      <InfoBox />
      <div className="flex min-h-0 flex-1">
        <Toolbox />
        <main className="flex min-w-0 flex-1 flex-col">
          <TabBar />
          <Canvas />
          <QuickOptions />
        </main>
        <Navigator />
      </div>
      <footer className="flex h-[11px] shrink-0 items-center">
        <span className="flex-1 pt-px">输入偏移量。</span>
        <button aria-label="窗口" className="pr-[3px]"><Glyph className="size-[9px] text-black" d="M1 2H12V5M1 2V10H3M4 6H15V14H4zM4 7H15" /></button>
        <span className="border-x border-[#ddd] px-2 font-[Lato] text-[8px] text-[#9a9a9a]">GRAPHISOFT ID</span>
        <span className="w-2.5" />
      </footer>
    </div>
  );
}

export default App;
